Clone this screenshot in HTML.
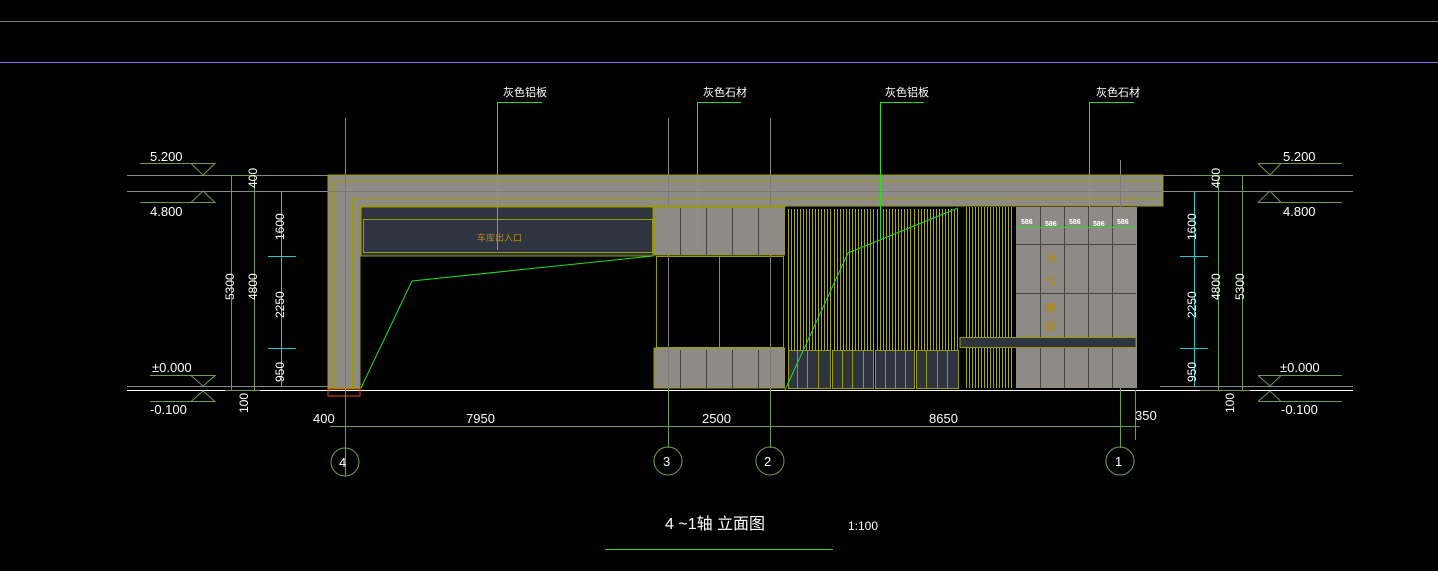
<!DOCTYPE html>
<html><head><meta charset="utf-8"><style>html,body{margin:0;padding:0;background:#000;overflow:hidden}svg{display:block}</style></head><body>
<svg width="1438" height="571" viewBox="0 0 1438 571" xmlns="http://www.w3.org/2000/svg" font-family="Liberation Sans, Noto Sans CJK SC, sans-serif">
<rect width="1438" height="571" fill="#000"/>
<line x1="0" y1="21.5" x2="1438" y2="21.5" stroke="#7a7a7a"/>
<line x1="0" y1="62.5" x2="1438" y2="62.5" stroke="#7d6cff"/>
<g fill="#fff" font-size="11">
<text x="503" y="96">灰色铝板</text><text x="703" y="96">灰色石材</text><text x="885" y="96">灰色铝板</text><text x="1096" y="96">灰色石材</text></g>
<!-- grid lines -->
<g stroke="#888">
<line x1="345.5" y1="118" x2="345.5" y2="390"/><line x1="668.5" y1="118" x2="668.5" y2="390"/><line x1="770.5" y1="118" x2="770.5" y2="390"/><line x1="1120.5" y1="160" x2="1120.5" y2="390"/>
</g>
<g stroke="#888"><line x1="127" y1="175.5" x2="330" y2="175.5"/><line x1="127" y1="191.5" x2="330" y2="191.5"/><line x1="127" y1="386.5" x2="330" y2="386.5"/>
<line x1="1160" y1="175.5" x2="1353" y2="175.5"/><line x1="1160" y1="191.5" x2="1353" y2="191.5"/><line x1="1160" y1="386.5" x2="1353" y2="386.5"/></g>
<!-- building -->
<path d="M328,175H1163V206H360V388H328Z" fill="#8e8b86" stroke="#9a9a00"/>
<line x1="352" y1="198.5" x2="1160" y2="198.5" stroke="#9a9a00"/>
<line x1="352.5" y1="198" x2="352.5" y2="388" stroke="#9a9a00"/>
<line x1="334.5" y1="181" x2="334.5" y2="388" stroke="#9a9a00"/>
<line x1="334" y1="181.5" x2="1160" y2="181.5" stroke="#9a9a00"/>
<g stroke="#7a7a7a"><line x1="328" y1="191.5" x2="1163" y2="191.5"/><line x1="345.5" y1="175" x2="345.5" y2="388"/><line x1="668.5" y1="175" x2="668.5" y2="206"/><line x1="770.5" y1="175" x2="770.5" y2="206"/><line x1="1120.5" y1="175" x2="1120.5" y2="388"/></g>
<rect x="361" y="207" width="292" height="49" fill="#2e3440" stroke="#9a9a00"/>
<rect x="363.5" y="219.5" width="289" height="33" fill="none" stroke="#9a9a00"/>
<text x="477" y="241" font-size="9" fill="#b08a10">车库出入口</text>
<rect x="654" y="207" width="131" height="48" fill="#8e8b86" stroke="#9a9a00"/>
<rect x="654" y="348" width="131" height="40" fill="#8e8b86" stroke="#9a9a00"/>
<g stroke="#444"><line x1="680.5" y1="208" x2="680.5" y2="255"/><line x1="706.5" y1="208" x2="706.5" y2="255"/><line x1="732.5" y1="208" x2="732.5" y2="255"/><line x1="758.5" y1="208" x2="758.5" y2="255"/>
<line x1="680.5" y1="350" x2="680.5" y2="388"/><line x1="706.5" y1="350" x2="706.5" y2="388"/><line x1="732.5" y1="350" x2="732.5" y2="388"/><line x1="758.5" y1="350" x2="758.5" y2="388"/></g>
<rect x="656.5" y="256.5" width="127" height="91" fill="none" stroke="#9a9a00"/>
<line x1="719.5" y1="256" x2="719.5" y2="348" stroke="#9a9a00"/>
<g stroke="#7a7a7a"><line x1="668.5" y1="256" x2="668.5" y2="390"/><line x1="770.5" y1="256" x2="770.5" y2="390"/></g>
<!-- slats -->
<rect x="785" y="207" width="175" height="181" fill="#000"/>
<g stroke="#aaaa00" stroke-width="1">
<path d="M788.5,209V350M791.5,209V350M794.5,209V350M797.5,209V350M800.5,209V350M803.5,209V350M806.5,209V350M809.5,209V350M812.5,209V350M815.5,209V350M818.5,209V350M821.5,209V350M824.5,209V350M827.5,209V350M830.5,209V350
M834.5,209V350M837.5,209V350M840.5,209V350M843.5,209V350M846.5,209V350M849.5,209V350M852.5,209V350M855.5,209V350M858.5,209V350M861.5,209V350M864.5,209V350M867.5,209V350M870.5,209V350M873.5,209V350
M877.5,209V350M880.5,209V350M883.5,209V350M886.5,209V350M889.5,209V350M892.5,209V350M895.5,209V350M898.5,209V350M901.5,209V350M904.5,209V350M907.5,209V350M910.5,209V350M914.5,209V350
M918.5,209V350M921.5,209V350M924.5,209V350M927.5,209V350M930.5,209V350M933.5,209V350M936.5,209V350M939.5,209V350M942.5,209V350M945.5,209V350M948.5,209V350M951.5,209V350M954.5,209V350M957.5,209V350"/>
<path d="M966.5,207V388M969.5,207V388M972.5,207V388M975.5,207V388M978.5,207V388M981.5,207V388M984.5,207V388M987.5,207V388M990.5,207V388M993.5,207V388M996.5,207V388M999.5,207V388M1002.5,207V388M1005.5,207V388M1008.5,207V388M1011.5,207V388"/>
</g>
<g fill="#2e3440" stroke="#9a9a00"><rect x="788.5" y="350.5" width="42" height="38"/><rect x="832.5" y="350.5" width="41" height="38"/><rect x="875.5" y="350.5" width="39" height="38"/><rect x="916.5" y="350.5" width="42" height="38"/></g>
<g stroke="#9a9a00"><path d="M797.5,350V388M807.5,350V388M818.5,350V388M842.5,350V388M852.5,350V388M863.5,350V388M885.5,350V388M895.5,350V388M905.5,350V388M926.5,350V388M937.5,350V388M947.5,350V388"/></g>
<!-- stone wall -->
<rect x="1016" y="207" width="121" height="181" fill="#8e8b86"/>
<g stroke="#444"><path d="M1040.5,207V388M1064.5,207V388M1088.5,207V388M1112.5,207V388M1016,244.5H1136M1016,293.5H1136"/></g>
<rect x="960" y="337.5" width="176" height="10" fill="#2e3440" stroke="#9a9a00"/>
<g fill="#b08a10" font-size="11"><text x="1045" y="262">海</text><text x="1045" y="285">信</text><text x="1045" y="312">观</text><text x="1045" y="330">澜</text></g>
<g fill="#fff" font-size="7" font-weight="bold"><text x="1021" y="224">586</text><text x="1045" y="226">586</text><text x="1069" y="224">586</text><text x="1093" y="226">586</text><text x="1117" y="224">586</text></g>
<line x1="1016" y1="227.5" x2="1136" y2="227.5" stroke="#22dd22"/>
<!-- green leaders -->
<g stroke="#22dd22" fill="none">
<polyline points="542,102.5 497.5,102.5 497.5,250"/>
<polyline points="741,102.5 697.5,102.5 697.5,247"/>
<polyline points="924,102.5 880.5,102.5 880.5,240"/>
<polyline points="1134,102.5 1089.5,102.5 1089.5,243"/>
<polyline points="361,388 412,281 653,256"/><polyline points="785,390 848,253 958,208"/></g>
<!-- ground -->
<line x1="127" y1="390.5" x2="1353" y2="390.5" stroke="#fff"/>
<rect x="328" y="389" width="32" height="7" fill="none" stroke="#e05010"/>
<g stroke="#6a9e4a" fill="none">
<path d="M140,163.5H215L203,175L191,163.5M140,202.5H215L203,191L191,202.5M150,375.5H215L203,386L191,375.5M150,401.5H215L203,391L191,401.5"/>
<path d="M231.5,175V390M254.5,175V390M225,175.5H260M225,390.5H260"/>
<path d="M1258,163.5H1342M1258,163.5L1270,175L1281,163.5M1258,202.5H1342M1258,202.5L1270,191L1281,202.5M1258,375.5H1342M1258,375.5L1270,386L1281,375.5M1258,401.5H1342M1258,401.5L1270,391L1281,401.5"/>
<path d="M1218.5,175V390M1242.5,175V390M1200,175.5H1250M1200,390.5H1250"/>
<path d="M345.5,390V476M668.5,390V448M770.5,390V448M1120.5,390V448M1135.5,390V440M330,426.5H1140"/>
<circle cx="345" cy="462" r="14"/><circle cx="668" cy="461" r="14"/><circle cx="770" cy="461" r="14"/><circle cx="1120" cy="461" r="14"/>
</g>
<g stroke="#22cccc" fill="none"><path d="M281.5,191V387M268,256.5H296M268,348.5H296M1194.5,191V387M1180,256.5H1208M1180,348.5H1208"/></g>
<g fill="#fff" font-size="13">
<text x="150" y="161">5.200</text><text x="150" y="216">4.800</text><text x="152" y="372">±0.000</text><text x="150" y="414">-0.100</text>
<text x="1283" y="161">5.200</text><text x="1283" y="216">4.800</text><text x="1280" y="372">±0.000</text><text x="1281" y="414">-0.100</text>
<text x="313" y="423">400</text><text x="466" y="423">7950</text><text x="702" y="423">2500</text><text x="929" y="423">8650</text><text x="1135" y="420">350</text>
<text x="339" y="467">4</text><text x="663" y="466">3</text><text x="764" y="466">2</text><text x="1115" y="466">1</text>
<text x="665" y="529" font-size="16">4 ~1轴 立面图</text><text x="848" y="530" font-size="12">1:100</text>
</g>
<g fill="#fff" font-size="12">
<text transform="translate(234,300) rotate(-90)">5300</text><text transform="translate(257,300) rotate(-90)">4800</text><text transform="translate(257,188) rotate(-90)">400</text>
<text transform="translate(284,240) rotate(-90)">1600</text><text transform="translate(284,318) rotate(-90)">2250</text><text transform="translate(284,382) rotate(-90)">950</text><text transform="translate(248,413) rotate(-90)">100</text>
<text transform="translate(1196,240) rotate(-90)">1600</text><text transform="translate(1196,318) rotate(-90)">2250</text><text transform="translate(1196,382) rotate(-90)">950</text>
<text transform="translate(1220,300) rotate(-90)">4800</text><text transform="translate(1244,300) rotate(-90)">5300</text><text transform="translate(1220,188) rotate(-90)">400</text><text transform="translate(1234,413) rotate(-90)">100</text>
</g>
<line x1="605" y1="549.5" x2="833" y2="549.5" stroke="#22dd22"/>
</svg>
</body></html>
